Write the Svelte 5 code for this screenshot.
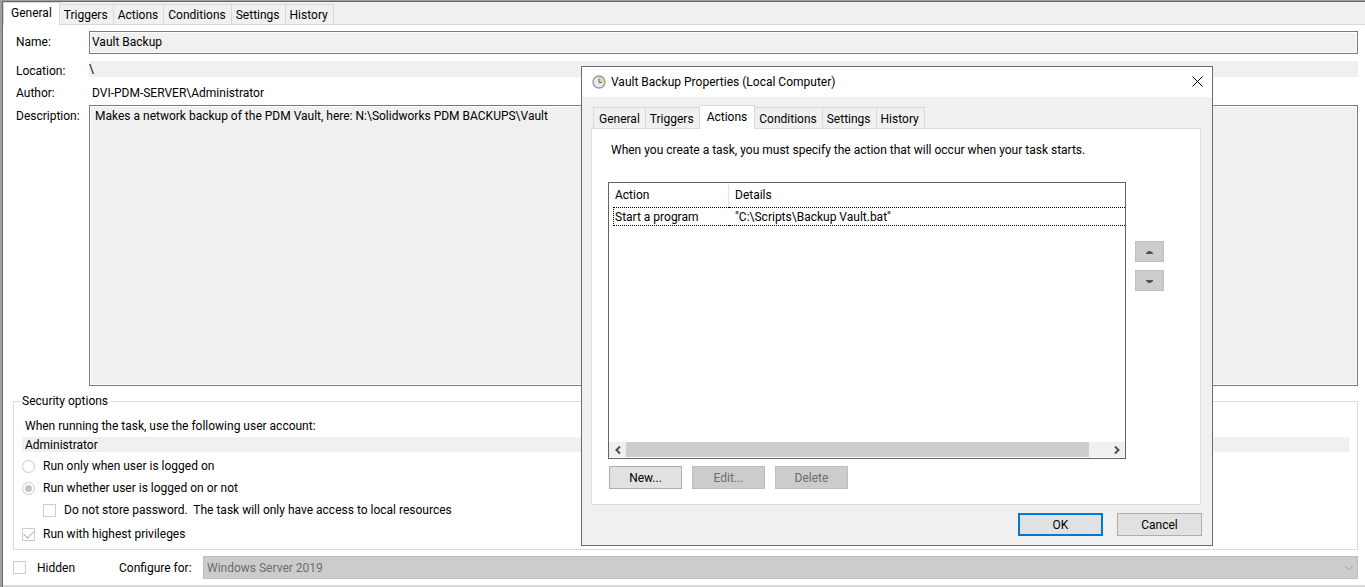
<script lang="ts">
	type Action = { action: string; details: string };

	const tabs = ["General", "Triggers", "Actions", "Conditions", "Settings", "History"];
	const actions: Action[] = [
		{ action: "Start a program", details: '"C:\\Scripts\\Backup Vault.bat"' }
	];

	let page_tab = $state("General");
	let dialog_tab = $state("Actions");
	let run_mode = $state("always");
	let description = $state(
		"Makes a network backup of the PDM Vault, here: N:\\Solidworks PDM BACKUPS\\Vault"
	);
</script>

{#snippet tab_strip(selected: string, select: (tab: string) => void)}
	<div class="tabs" role="tablist">
		{#each tabs as tab}
			<button
				type="button"
				role="tab"
				class="tab"
				class:active={tab === selected}
				aria-selected={tab === selected}
				onclick={() => select(tab)}
			>
				{tab}
			</button>
		{/each}
	</div>
{/snippet}

<main class="task">
	{@render tab_strip(page_tab, (tab) => (page_tab = tab))}

	<div class="page">
		<div class="field name">
			<label for="name">Name:</label>
			<input id="name" type="text" class="boxed" value="Vault Backup" readonly />
		</div>
		<div class="field location">
			<label for="location">Location:</label>
			<input id="location" type="text" class="flat" value="\" readonly />
		</div>
		<div class="field author">
			<span class="caption">Author:</span>
			<span class="value">DVI-PDM-SERVER\Administrator</span>
		</div>
		<div class="field description">
			<label for="description">Description:</label>
			<textarea id="description" class="boxed" bind:value={description} readonly></textarea>
		</div>

		<fieldset>
			<legend>Security options</legend>
			<label class="account-label" for="account">When running the task, use the following user account:</label>
			<input id="account" type="text" class="flat account" value="Administrator" readonly />
			<label class="option">
				<input type="radio" name="run" value="logged-on" bind:group={run_mode} disabled />
				Run only when user is logged on
			</label>
			<label class="option">
				<input type="radio" name="run" value="always" bind:group={run_mode} disabled />
				Run whether user is logged on or not
			</label>
			<label class="option nested">
				<input type="checkbox" disabled />
				Do not store password.&nbsp; The task will only have access to local resources
			</label>
			<label class="option last">
				<input type="checkbox" checked disabled />
				Run with highest privileges
			</label>
		</fieldset>

		<div class="footer">
			<label class="option">
				<input type="checkbox" disabled />
				Hidden
			</label>
			<label class="configure" for="configure">Configure for:</label>
			<div class="select">
				<select id="configure" disabled>
					<option>Windows Server 2019</option>
				</select>
				<svg viewBox="0 0 10 6" width="10" height="6" aria-hidden="true">
					<path d="M1 1l4 4 4-4" />
				</svg>
			</div>
		</div>
	</div>
</main>

<div class="dialog" role="dialog" aria-labelledby="dialog-title">
	<header>
		<svg viewBox="0 0 14 14" width="14" height="14" aria-hidden="true">
			<circle cx="7" cy="7" r="6" fill="#e3ebf3" stroke="#96999c" stroke-width="1.4" />
			<path d="M7 7V2a5 5 0 0 1 5 5z" fill="#f3d48b" />
			<path d="M7 3.500v4h3" fill="none" stroke="#5c6670" />
		</svg>
		<h1 id="dialog-title">Vault Backup Properties (Local Computer)</h1>
		<button type="button" class="close" aria-label="Close">
			<svg viewBox="0 0 11 11" width="11" height="11"><path d="M.5.5l10 10M10.5.5l-10 10" /></svg>
		</button>
	</header>

	<div class="body">
		{@render tab_strip(dialog_tab, (tab) => (dialog_tab = tab))}

		<div class="pane">
			<p>When you create a task, you must specify the action that will occur when your task starts.</p>
			<div class="actions">
				<div class="list">
					<table>
						<thead>
							<tr><th>Action</th><th>Details</th></tr>
						</thead>
						<tbody>
							{#each actions as row}
								<tr><td>{row.action}</td><td>{row.details}</td></tr>
							{/each}
						</tbody>
					</table>
					<div class="scrollbar">
						<button type="button" aria-label="Scroll left">
							<svg viewBox="0 0 6 8" width="6" height="8"><path d="M5 .5L1.5 4 5 7.5" /></svg>
						</button>
						<div class="track"><div class="thumb"></div></div>
						<button type="button" aria-label="Scroll right">
							<svg viewBox="0 0 6 8" width="6" height="8"><path d="M1 .5L4.500 4 1 7.500" /></svg>
						</button>
					</div>
				</div>
				<div class="order">
					<button type="button" class="push" aria-label="Move up" disabled>
						<svg viewBox="0 0 7 3" width="7" height="3"><path d="M0 3V2l2.500-2h2L7 2v1z" /></svg>
					</button>
					<button type="button" class="push" aria-label="Move down" disabled>
						<svg viewBox="0 0 7 3" width="7" height="3"><path d="M0 0v1l2.500 2h2L7 1V0z" /></svg>
					</button>
				</div>
			</div>
			<div class="edit">
				<button type="button" class="push">New...</button>
				<button type="button" class="push" disabled>Edit...</button>
				<button type="button" class="push" disabled>Delete</button>
			</div>
		</div>

		<div class="confirm">
			<button type="button" class="push default">OK</button>
			<button type="button" class="push">Cancel</button>
		</div>
	</div>
</div>

<style>
	:global(body) {
		background: #fff;
		color: #000;
		font-family: Roboto, "Open Sans", sans-serif;
		font-size: 12px;
		line-height: 16px;
	}

	:global(*) {
		box-sizing: border-box;
	}

	button,
	input,
	textarea,
	select {
		margin: 0;
		border: 0;
		border-radius: 0;
		padding: 0;
		color: inherit;
		font: inherit;
	}

	/* sunken edge: light outer line, dark inner line */
	.task {
		display: flex;
		flex-direction: column;
		border: solid #a0a0a0;
		border-width: 1px 0 0 2px;
		background: #696969;
		padding: 1px 0 0 1px;
		min-height: 100vh;
	}

	/* tabs */
	.tabs {
		display: flex;
		align-items: flex-end;
		height: 23px;
		background: #f0f0f0;
		box-shadow: inset 0 -1px #d9d9d9;
	}

	.tab {
		border: 1px solid #d9d9d9;
		border-left-width: 0;
		background: #f0f0f0;
		padding: 1px 5px 0 4px;
		height: 21px;
		line-height: 18px;
	}

	.tab:first-child {
		border-left-width: 1px;
		padding-left: 5px;
	}

	.tab.active {
		border-bottom: 0;
		background: #fff;
		padding: 0 7px 2px;
		height: 23px;
	}

	/* task page */
	.page {
		display: flex;
		flex: 1;
		flex-direction: column;
		border-bottom: 2px solid #d9d9d9;
		background: #fff;
		padding: 6px 7px 6px 10px;
	}

	.field {
		display: flex;
		padding-left: 3px;
	}

	.field label,
	.caption {
		flex: none;
		width: 73px;
	}

	.name {
		margin-bottom: 7px;
	}

	.name label {
		padding-top: 3px;
	}

	.location {
		margin-bottom: 8px;
	}

	.location label {
		padding-top: 2px;
		height: 16px;
	}

	.author {
		margin-bottom: 4px;
	}

	.value {
		padding-left: 3px;
	}

	.description {
		flex: 1;
		margin-bottom: 7px;
	}

	.description label {
		padding-top: 3px;
	}

	.boxed {
		flex: 1;
		min-width: 0;
		border: 1px solid #7a7a7a;
		box-shadow: inset 0 0 0 1px #fff;
		background: #f0f0f0;
		padding: 1px 2px 3px;
		height: 23px;
	}

	textarea.boxed {
		min-height: 100px;
		height: auto;
		padding: 2px 5px;
		resize: none;
	}

	.flat {
		flex: 1;
		min-width: 0;
		background: #f0f0f0;
		height: 16px;
	}

	fieldset {
		display: flex;
		flex-direction: column;
		margin: 0;
		border: 1px solid #dcdcdc;
		padding: 9px 8px 4px;
		min-width: 0;
	}

	legend {
		padding: 0 2px 0 0;
	}

	.account-label {
		padding-left: 3px;
		margin-bottom: 3px;
	}

	.flat.account {
		flex: none;
		margin-bottom: 3px;
		padding-left: 3px;
		height: 15px;
	}

	.option {
		display: flex;
		align-items: center;
		gap: 8px;
		height: 22px;
	}

	.option.nested {
		margin-left: 21px;
	}

	.option.last {
		margin-top: 2px;
	}

	.option input {
		display: grid;
		flex: none;
		place-content: center;
		appearance: none;
		border: 1px solid #ccc;
		background: #fff;
		width: 13px;
		height: 13px;
	}

	.option input[type="radio"] {
		border-radius: 50%;
	}

	.option input[type="radio"]:checked::before {
		border-radius: 50%;
		background: #c4c4c4;
		width: 7px;
		height: 7px;
		content: "";
	}

	.option input[type="checkbox"]:checked::before {
		transform: rotate(-45deg);
		margin-bottom: 3px;
		border: solid #b5b5b5;
		border-width: 0 0 1px 1px;
		width: 9px;
		height: 5px;
		content: "";
	}

	.footer {
		display: flex;
		align-items: center;
		margin-top: 6px;
	}

	.footer .option {
		gap: 11px;
		width: 106px;
	}

	.configure {
		min-width: 74px;
	}

	.select {
		display: flex;
		position: relative;
		flex: 1;
		align-items: center;
		margin-left: 10px;
	}

	select {
		flex: 1;
		appearance: none;
		border: 1px solid #bfbfbf;
		background: #ccc;
		padding: 0 3px;
		height: 23px;
		color: #6d6d6d;
		opacity: 1;
	}

	.select svg {
		position: absolute;
		right: 4px;
		fill: none;
		stroke: #a3a3a3;
		pointer-events: none;
	}

	/* properties dialog */
	.dialog {
		position: absolute;
		top: 66px;
		left: 581px;
		border: 1px solid #6b6b6b;
		background: #f0f0f0;
		width: 632px;
	}

	header {
		display: flex;
		align-items: center;
		background: #fff;
		padding-left: 10px;
		height: 30px;
	}

	h1 {
		flex: 1;
		margin: 0 0 0 5px;
		font-weight: 400;
		font-size: 12px;
	}

	.close {
		align-self: flex-start;
		background: none;
		width: 30px;
		height: 28px;
		line-height: 0;
	}

	.close path {
		stroke: #000;
	}

	.body {
		padding: 8px 10px 9px 9px;
	}

	.dialog .tabs {
		box-shadow: none;
		padding-left: 2px;
	}

	.pane {
		margin-right: 1px;
		border: 1px solid #dcdcdc;
		background: #fff;
		padding: 13px 16px 15px;
	}

	.dialog .tab {
		border-bottom: 0;
	}

	/* covers the pane's top line under the selected tab */
	.dialog .tab.active {
		z-index: 1;
		margin-bottom: -1px;
		height: 24px;
	}

	p {
		margin: 0 0 24px 3px;
	}

	.actions {
		display: flex;
		gap: 9px;
	}

	.list {
		display: flex;
		flex-direction: column;
		border: 1px solid #646464;
		width: 518px;
		height: 277px;
	}

	table {
		margin-left: 4px;
		border-spacing: 0;
		table-layout: fixed;
		width: 512px;
	}

	th,
	td {
		padding: 0 1px;
		text-align: left;
		font-weight: 400;
	}

	th {
		height: 24px;
		padding-left: 2px;
	}

	th:first-child {
		border-right: 1px solid #e5e5e5;
		width: 116px;
	}

	th:last-child,
	td:last-child {
		padding-left: 6px;
	}

	td {
		border: dotted #000;
		border-width: 1px 0;
		height: 19px;
	}

	td:first-child {
		border-left-width: 1px;
	}

	.scrollbar {
		display: flex;
		margin-top: auto;
		margin-bottom: 1px;
		background: #f0f0f0;
		height: 15px;
	}

	.scrollbar button {
		background: none;
		width: 17px;
		line-height: 0;
	}

	.scrollbar path {
		fill: none;
		stroke: #505050;
		stroke-width: 2;
	}

	.track {
		flex: 1;
	}

	.thumb {
		background: #cdcdcd;
		width: 96%;
		height: 100%;
	}

	.order {
		display: flex;
		flex-direction: column;
		gap: 8px;
		padding-top: 59px;
	}

	.push {
		border: 1px solid #adadad;
		background: #e1e1e1;
		height: 23px;
	}

	.push:disabled {
		border-color: #bfbfbf;
		background: #ccc;
		color: #6d6d6d;
	}

	.order .push {
		width: 29px;
		height: 21px;
		line-height: 0;
	}

	.order path {
		fill: #505050;
	}

	.edit {
		display: flex;
		gap: 10px;
		margin-top: 7px;
		padding-left: 1px;
	}

	.edit .push {
		width: 73px;
	}

	.confirm {
		display: flex;
		justify-content: flex-end;
		gap: 14px;
		margin-top: 8px;
	}

	.confirm .push {
		width: 85px;
	}

	.push.default {
		border: 2px solid #0078d7;
	}
</style>
